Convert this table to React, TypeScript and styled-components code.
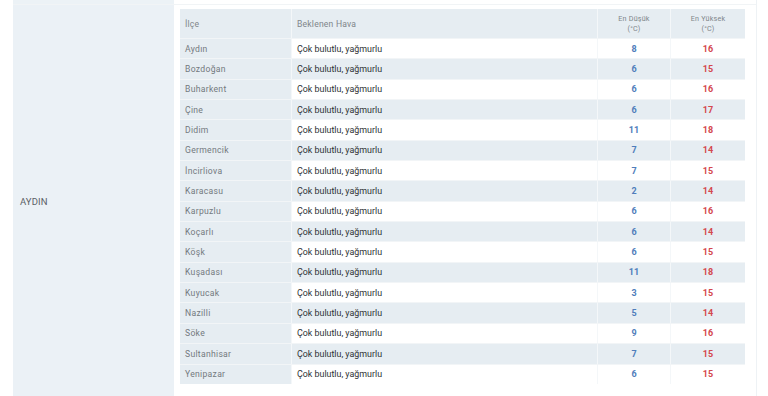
import React from "react";
import styled, { createGlobalStyle } from "styled-components";

type District = {
  name: string;
  low: number;
  high: number;
};

const districts: District[] = [
  { name: "Aydın", low: 8, high: 16 },
  { name: "Bozdoğan", low: 6, high: 15 },
  { name: "Buharkent", low: 6, high: 16 },
  { name: "Çine", low: 6, high: 17 },
  { name: "Didim", low: 11, high: 18 },
  { name: "Germencik", low: 7, high: 14 },
  { name: "İncirliova", low: 7, high: 15 },
  { name: "Karacasu", low: 2, high: 14 },
  { name: "Karpuzlu", low: 6, high: 16 },
  { name: "Koçarlı", low: 6, high: 14 },
  { name: "Köşk", low: 6, high: 15 },
  { name: "Kuşadası", low: 11, high: 18 },
  { name: "Kuyucak", low: 3, high: 15 },
  { name: "Nazilli", low: 5, high: 14 },
  { name: "Söke", low: 9, high: 16 },
  { name: "Sultanhisar", low: 7, high: 15 },
  { name: "Yenipazar", low: 6, high: 15 },
];

const GlobalStyle = createGlobalStyle`
  html, body {
    margin: 0;
    padding: 0;
    background: #ffffff;
    font-family: Roboto, "Noto Sans", sans-serif;
    overflow: hidden;
  }
`;

export default function App() {
  return (
    <>
      <GlobalStyle />
      <Page>
        <Outer>
          <PrevRow>
            <PrevLeft />
            <PrevRight />
          </PrevRow>
          <ProvinceRow>
            <Province>AYDIN</Province>
            <DistrictsCell>
              <Inner>
                <HeadRow>
                  <HeadCell>İlçe</HeadCell>
                  <HeadCell>Beklenen Hava</HeadCell>
                  <HeadCell center>
                    En Düşük
                    <br />
                    (°C)
                  </HeadCell>
                  <HeadCell center>
                    En Yüksek
                    <br />
                    (°C)
                  </HeadCell>
                </HeadRow>
                {districts.map((d, i) => (
                  <BodyRow key={d.name} striped={i % 2 === 1}>
                    <NameCell>{d.name}</NameCell>
                    <WeatherCell>Çok bulutlu, yağmurlu</WeatherCell>
                    <TempCell color="#4f7dbb">{d.low}</TempCell>
                    <TempCell color="#d4474d">{d.high}</TempCell>
                  </BodyRow>
                ))}
              </Inner>
            </DistrictsCell>
          </ProvinceRow>
        </Outer>
      </Page>
    </>
  );
}

const Page = styled.div`
  width: 768px;
  height: 396px;
  padding-left: 13px;
  box-sizing: border-box;
  overflow: hidden;
`;

const Outer = styled.div`
  width: 743px;
  border-right: 1px solid #eef2f5;
`;

const PrevRow = styled.div`
  display: grid;
  grid-template-columns: 161px 1fr;
  height: 4px;
  border-bottom: 1px solid #f1f4f6;
`;

const PrevLeft = styled.div`
  background: #ecf2f6;
`;

const PrevRight = styled.div`
  background: #ffffff;
`;

const ProvinceRow = styled.div`
  display: grid;
  grid-template-columns: 161px 1fr;
`;

const Province = styled.div`
  background: #ebf1f6;
  display: flex;
  align-items: center;
  padding-left: 7px;
  font-size: 9.5px;
  color: #5b6166;
  letter-spacing: 0.1px;
`;

const DistrictsCell = styled.div`
  padding: 4px 10px 14px 6px;
  background: #ffffff;
`;

const Inner = styled.div`
  width: 565px;
  display: flex;
  flex-direction: column;
`;

const HeadRow = styled.div`
  display: grid;
  grid-template-columns: 112px 306px 73px 74px;
  height: 29px;
  background: #e6edf2;
`;

const HeadCell = styled.div<{ center?: boolean }>`
  display: flex;
  flex-direction: column;
  justify-content: center;
  align-items: ${(p) => (p.center ? "center" : "flex-start")};
  text-align: ${(p) => (p.center ? "center" : "left")};
  padding-left: ${(p) => (p.center ? "0" : "5px")};
  border-right: 1px solid #f4f7f9;
  font-size: ${(p) => (p.center ? "7.2px" : "8.6px")};
  line-height: ${(p) => (p.center ? "10px" : "normal")};
  color: #80868a;
  letter-spacing: 0.2px;
  &:last-child {
    border-right: none;
  }
`;

const BodyRow = styled.div<{ striped: boolean }>`
  display: grid;
  grid-template-columns: 112px 306px 73px 74px;
  height: 20.35px;
  box-sizing: border-box;
  border-top: 1px solid #f2f5f7;
  background: ${(p) => (p.striped ? "#e6edf2" : "#ffffff")};
`;

const NameCell = styled.div`
  display: flex;
  align-items: center;
  padding-left: 5px;
  background: #e6edf2;
  border-right: 1px solid #f4f7f9;
  font-size: 8.6px;
  color: #73797e;
  letter-spacing: 0.3px;
`;

const WeatherCell = styled.div`
  display: flex;
  align-items: center;
  padding-left: 5px;
  border-right: 1px solid #f4f7f9;
  font-size: 8.9px;
  color: #2e3235;
`;

const TempCell = styled.div<{ color: string }>`
  display: flex;
  align-items: center;
  justify-content: center;
  border-right: 1px solid #f4f7f9;
  font-size: 9px;
  font-weight: 700;
  color: ${(p) => p.color};
  &:last-child {
    border-right: none;
  }
`;
